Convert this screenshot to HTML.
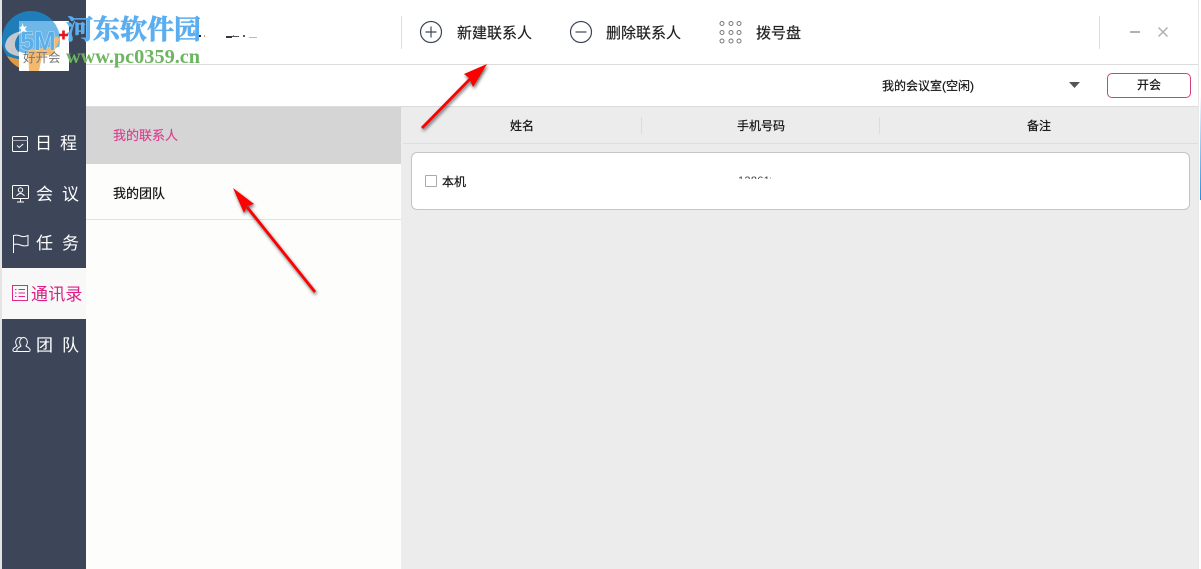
<!DOCTYPE html>
<html lang="zh">
<head>
<meta charset="utf-8">
<title>通讯录</title>
<style>
html,body{margin:0;padding:0}
body{width:1201px;height:569px;overflow:hidden;position:relative;background:#fff;font-family:"Liberation Sans","Noto Sans CJK SC",sans-serif;color:#222}
.a{position:absolute;white-space:nowrap}
.nav{position:absolute;font-size:17px;line-height:24px;color:#fff;white-space:nowrap}
.t{font-size:15px;line-height:20px;color:#222;-webkit-text-stroke:.2px #222}
.h{font-size:12px;line-height:18px;color:#111;-webkit-text-stroke:.2px #111}
svg{position:absolute;overflow:visible}
</style>
</head>
<body>
<!-- backgrounds -->
<div class="a" style="left:0;top:0;width:2px;height:569px;background:#e4e4e4"></div>
<div class="a" style="left:2px;top:0;width:84px;height:569px;background:#3c4658"></div>
<div class="a" style="left:86px;top:64px;width:1112px;height:1px;background:#dcdcdc"></div>
<div class="a" style="left:86px;top:107px;width:315px;height:57px;background:#d5d5d5"></div>
<div class="a" style="left:86px;top:164px;width:315px;height:405px;background:#fdfdfb"></div>
<div class="a" style="left:86px;top:219px;width:315px;height:1px;background:#e2e2e2"></div>
<div class="a" style="left:401px;top:107px;width:797px;height:462px;background:#ececec"></div>
<div class="a" style="left:86px;top:106px;width:1112px;height:1px;background:#dcdcdc"></div>
<div class="a" style="left:403px;top:143px;width:795px;height:1px;background:#dedede"></div>
<div class="a" style="left:1198px;top:0;width:1px;height:569px;background:#e8e8e8"></div>
<div class="a" style="left:1200px;top:95px;width:1px;height:105px;background:linear-gradient(#fff,#1a8fe8)"></div>
<div class="a" style="left:2px;top:268px;width:84px;height:51px;background:#f8f8f9"></div>

<!-- logo + watermark -->
<svg style="left:0;top:0" width="90" height="80">
<defs><clipPath id="box"><rect x="19" y="21" width="50" height="50" rx="1"/></clipPath></defs>
<circle cx="31" cy="40" r="29" fill="#1f7eb9"/>
<path d="M7 56q8 14 24 14q14 0 23-10l-3-4q-22 8-44 0z" fill="#e09a45"/>
<path d="M5 46q1-12 17-15q-8 8-7 15q1 6 8 8 15 3 30-4-11 9-30 7Q6 55 5 46z" fill="#c5c9cd"/>
<rect x="19" y="21" width="50" height="50" rx="1" fill="#fff"/>
<g clip-path="url(#box)">
<circle cx="31" cy="40" r="29" fill="#6fb7e6"/>
<path d="M4 50Q6 34 22 31q-7 7-7 14 1 7 9 8 15 3 34-6l12 0 0 30H4z" fill="#fff"/>
<path d="M28 50l22-3 6-11 4 3-7 15-11 2-3 15H29z" fill="#f2b96f"/>
<path d="M22 23l2 4 3-1-2 3 2 3-4-1-2 2v-4l-2-1 3-2z" fill="#fff"/>
</g>
<path d="M59 35h9M63.500 30.500v9" stroke="#e8121a" stroke-width="2.600" fill="none"/>
</svg>
<div class="a" style="left:23px;top:50px;font-size:12.500px;line-height:16px;color:#777">好开会</div>
<div class="a" style="left:20px;top:27px;font:bold 26px/28px 'Liberation Sans',sans-serif;color:#5aaeea;letter-spacing:-.5px;-webkit-text-stroke:.6px #fff;paint-order:stroke">5M</div>
<div class="a" style="left:66px;top:13px;font:bold 27px/34px 'Liberation Serif','Noto Serif CJK SC',serif;color:#5aaef0;-webkit-text-stroke:.7px #5aaef0">河东软件园</div>
<div class="a" style="left:66px;top:46px;font:bold 20.300px/22px 'Liberation Serif',serif;color:#6db55f">www.pc0359.cn</div>
<div class="a" style="left:199px;top:35px;width:2px;height:2px;background:#223"></div>
<div class="a" style="left:204px;top:35px;width:1px;height:2px;background:#e8a060"></div>
<div class="a" style="left:226px;top:36px;width:6px;height:2px;background:#334"></div>
<div class="a" style="left:233px;top:35px;width:1px;height:2px;background:#77a"></div>
<div class="a" style="left:232px;top:36px;width:7px;height:1px;background:#555"></div>
<div class="a" style="left:243px;top:35px;width:2px;height:2px;background:#556"></div>
<div class="a" style="left:249px;top:37px;width:8px;height:1px;background:#bbb"></div>

<!-- sidebar -->
<svg style="left:12px;top:136px" width="18" height="18" fill="none" stroke="#fff" stroke-width="1">
<rect x=".5" y=".5" width="15" height="15" rx="1"/><path d="M.5 4.500h15" stroke="#aab"/><path d="M5 9.500l2.200 2 4-3.500"/>
</svg>
<div class="nav" style="left:35px;top:132px">日</div><div class="nav" style="left:60px;top:132px">程</div>
<svg style="left:12px;top:185px" width="18" height="18" fill="none" stroke="#fff" stroke-width="1">
<rect x=".5" y=".5" width="16" height="13" rx="1"/><circle cx="8.500" cy="5" r="2.200"/><path d="M4.500 11q4-5 8 0M8.500 14v2.500M5 17h7"/>
</svg>
<div class="nav" style="left:36px;top:183px">会</div><div class="nav" style="left:62px;top:183px">议</div>
<svg style="left:12px;top:234px" width="18" height="20" fill="none" stroke="#fff" stroke-width="1">
<path d="M1.500 19V1.500q4-1 7 .5t7.500-.5v10q-4 1-7.500-.5t-7-.5" />
</svg>
<div class="nav" style="left:36px;top:232px">任</div><div class="nav" style="left:62px;top:232px">务</div>
<svg style="left:12px;top:285px" width="18" height="18" fill="none" stroke="#e0288b" stroke-width="1">
<rect x=".5" y=".5" width="15" height="15"/><path d="M3 4.500h1.500M3 8h1.500M3 11.500h1.500M6.500 4.500h6.500M6.500 8h6.500M6.500 11.500h6.500"/>
</svg>
<div class="nav" style="left:31px;top:283px;color:#dd1f85;letter-spacing:.2px">通讯录</div>
<svg style="left:12px;top:336px" width="19" height="18" fill="none" stroke="#fff" stroke-width="1">
<path d="M5 15.500H2.500q-2 0-1.500-2c.4-1.500 3-2.500 4-3.500-1-1.500-1.500-3-1.300-4.500C3.900 3 5.700 1.500 7.500 1.500c1 0 2 .5 2.500 1.200"/>
<path d="M6 15.500h10.500q2 0 1.500-2c-.4-1.500-3-2.500-4-3.500 1-1.500 1.500-3 1.300-4.500-.2-2.500-2-4-3.800-4S8 3 7.700 5.500C7.500 7 8 8.500 9 10c-1 1-3.600 2-4 3.500-.3 1.200 0 2 1 2z"/>
</svg>
<div class="nav" style="left:36px;top:334px">团</div><div class="nav" style="left:62px;top:334px">队</div>

<!-- top toolbar -->
<div class="a" style="left:401px;top:16px;width:1px;height:33px;background:#dcdcdc"></div>
<svg style="left:420px;top:21px" width="23" height="23" fill="none" stroke="#3c4658" stroke-width="1.200">
<circle cx="11" cy="11" r="10.500"/><path d="M11 5.500v11M5.500 11h11"/>
</svg>
<div class="a t" style="left:457px;top:24px">新建联系人</div>
<svg style="left:570px;top:21px" width="23" height="23" fill="none" stroke="#3c4658" stroke-width="1.200">
<circle cx="11" cy="11" r="10.500"/><path d="M5.500 11h11"/>
</svg>
<div class="a t" style="left:606px;top:24px">删除联系人</div>
<svg style="left:718px;top:21px" width="24" height="24" fill="none" stroke="#777" stroke-width="1">
<circle cx="4" cy="2.500" r="2"/><circle cx="13" cy="2.500" r="2"/><circle cx="21" cy="2.500" r="2"/>
<circle cx="4" cy="11.500" r="2"/><circle cx="13" cy="11.500" r="2"/><circle cx="21" cy="11.500" r="2"/>
<circle cx="4" cy="20" r="2"/><circle cx="13" cy="20" r="2"/><circle cx="21" cy="20" r="2"/>
</svg>
<div class="a t" style="left:756px;top:24px">拨号盘</div>
<div class="a" style="left:1099px;top:16px;width:1px;height:33px;background:#dcdcdc"></div>
<div class="a" style="left:1130px;top:31px;width:10px;height:2px;background:#b0b0b0"></div>
<svg style="left:1158px;top:27px" width="10" height="10" fill="none" stroke="#b0b0b0" stroke-width="1.500"><path d="M.5.500l9 9M9.500.500l-9 9"/></svg>

<!-- meeting row -->
<div class="a h" style="left:882px;top:77px">我的会议室(空闲)</div>
<svg style="left:1069px;top:82px" width="11" height="7"><path d="M0 0h11L5.500 6z" fill="#555"/></svg>
<div class="a h" style="left:1107px;top:73px;width:82px;height:23px;border:1px solid #d4407f;border-radius:5px;background:#fff;text-align:center;line-height:23px">开会</div>

<!-- left list -->
<div class="a" style="left:113px;top:126px;font-size:13px;line-height:19px;color:#dc3d92;-webkit-text-stroke:.15px #dc3d92">我的联系人</div>
<div class="a" style="left:113px;top:184px;font-size:13px;line-height:19px;color:#111;-webkit-text-stroke:.2px #111">我的团队</div>

<!-- table header -->
<div class="a h" style="left:510px;top:117px">姓名</div>
<div class="a h" style="left:737px;top:117px">手机号码</div>
<div class="a h" style="left:1027px;top:117px">备注</div>
<div class="a" style="left:641px;top:117px;width:1px;height:17px;background:#dcdcdc"></div>
<div class="a" style="left:879px;top:117px;width:1px;height:17px;background:#dcdcdc"></div>

<!-- row -->
<div class="a" style="left:411px;top:152px;width:777px;height:56px;background:#fff;border:1px solid #c4c4c4;border-radius:6px"></div>
<div class="a" style="left:425px;top:175px;width:10px;height:10px;border:1px solid #aaa;border-radius:1px;background:#fff"></div>
<div class="a h" style="left:442px;top:173px">本机</div>
<div class="a" style="left:738px;top:176px;width:33px;height:3px;overflow:hidden"><div style="font-size:11px;line-height:16px;margin-top:-3px;color:#444;letter-spacing:.3px">138611</div></div>

<!-- arrows -->
<svg style="left:0;top:0;filter:drop-shadow(1px 2px 1.500px rgba(0,0,0,.6))" width="1201" height="569">
<path d="M422 128L470 79" stroke="#f00" stroke-width="2.800" fill="none"/>
<path d="M487 64L473 87 469 78 464 74z" fill="#f00"/>
<path d="M315 292L247 207" stroke="#f00" stroke-width="2.800" fill="none"/>
<path d="M233 188L254 204 247 206 244 213z" fill="#f00"/>
</svg>
</body>
</html>
